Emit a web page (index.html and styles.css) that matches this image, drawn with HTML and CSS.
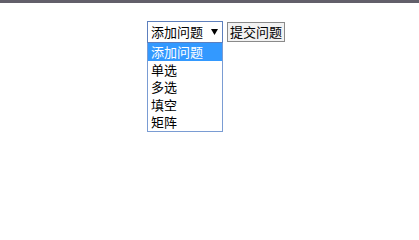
FILE: index.html
```html
<!DOCTYPE html>
<html lang="zh">
<head>
<meta charset="utf-8">
<link rel="stylesheet" href="styles.css">
</head>
<body>
<div class="topbar"></div>
<div class="form">
  <div class="select-wrap">
    <div class="select"><span class="select-label">添加问题</span><svg class="arrow" width="7" height="6" viewBox="0 0 7 6"><path d="M0 0H7L3.5 6Z" fill="#000"/></svg></div>
    <div class="dropdown">
      <div class="item selected">添加问题</div>
      <div class="item">单选</div>
      <div class="item">多选</div>
      <div class="item">填空</div>
      <div class="item">矩阵</div>
    </div>
  </div>
  <div class="submit">提交问题</div>
</div>
</body>
</html>
```
FILE: styles.css
```css
html, body {
  margin: 0;
  padding: 0;
  background: #ffffff;
  font-family: "Noto Sans CJK SC", "Noto Sans", sans-serif;
  font-size: 13px;
  color: #000;
}
.topbar {
  height: 3px;
  background: #625f6a;
}
.form {
  display: flex;
  align-items: flex-start;
  gap: 4px;
  margin: 18px 0 0 147px;
}
.select-wrap {
  display: flex;
  flex-direction: column;
  width: 76px;
}
.select {
  box-sizing: border-box;
  width: 76px;
  height: 22px;
  border: 1px solid #5d7fbd;
  display: flex;
  align-items: center;
  justify-content: space-between;
  padding: 0 4px 0 3px;
  line-height: 20px;
  background: #fff;
}
.dropdown {
  width: 76px;
  box-sizing: border-box;
  border: 1px solid #7a9cd3;
  border-top: none;
  background: #fff;
}
.item {
  height: 17.6px;
  line-height: 17.6px;
  padding: 0 3px;
  white-space: nowrap;
}
.item.selected {
  background: #3399ff;
  color: #fff;
}
.submit {
  box-sizing: border-box;
  height: 20px;
  margin-top: 1px;
  padding: 0 2px;
  line-height: 18px;
  border: 1px solid #8a8a8a;
  background: #f2f2f2;
  color: #000;
}
```
